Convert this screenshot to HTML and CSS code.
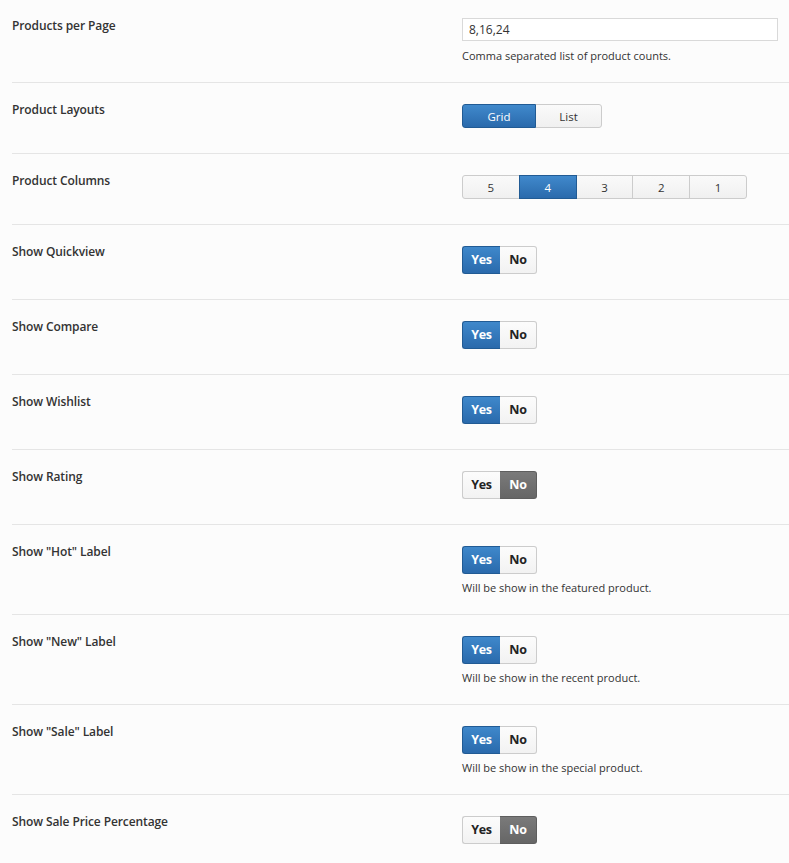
FILE: index.html
```html
<!DOCTYPE html>
<html>
<head>
<meta charset="utf-8">
<link rel="stylesheet" href="styles.css">
</head>
<body>
<div class="form">
  <div class="row first">
    <div class="label">Products per Page</div>
    <div class="ctrl">
      <input class="text" type="text" value="8,16,24">
      <div class="help">Comma separated list of product counts.</div>
    </div>
  </div>
  <div class="row">
    <div class="label">Product Layouts</div>
    <div class="ctrl">
      <div class="group">
        <span class="btn active w-grid">Grid</span><span class="btn w-list">List</span>
      </div>
    </div>
  </div>
  <div class="row">
    <div class="label">Product Columns</div>
    <div class="ctrl">
      <div class="group">
        <span class="btn w-col">5</span><span class="btn active w-col">4</span><span class="btn w-col">3</span><span class="btn w-col">2</span><span class="btn w-col">1</span>
      </div>
    </div>
  </div>
  <div class="row">
    <div class="label">Show Quickview</div>
    <div class="ctrl"><div class="toggle"><span class="t yes on">Yes</span><span class="t no">No</span></div></div>
  </div>
  <div class="row">
    <div class="label">Show Compare</div>
    <div class="ctrl"><div class="toggle"><span class="t yes on">Yes</span><span class="t no">No</span></div></div>
  </div>
  <div class="row">
    <div class="label">Show Wishlist</div>
    <div class="ctrl"><div class="toggle"><span class="t yes on">Yes</span><span class="t no">No</span></div></div>
  </div>
  <div class="row">
    <div class="label">Show Rating</div>
    <div class="ctrl"><div class="toggle"><span class="t yes">Yes</span><span class="t no off">No</span></div></div>
  </div>
  <div class="row">
    <div class="label">Show "Hot" Label</div>
    <div class="ctrl"><div class="toggle"><span class="t yes on">Yes</span><span class="t no">No</span></div>
      <div class="help">Will be show in the featured product.</div></div>
  </div>
  <div class="row">
    <div class="label">Show "New" Label</div>
    <div class="ctrl"><div class="toggle"><span class="t yes on">Yes</span><span class="t no">No</span></div>
      <div class="help">Will be show in the recent product.</div></div>
  </div>
  <div class="row">
    <div class="label">Show "Sale" Label</div>
    <div class="ctrl"><div class="toggle"><span class="t yes on">Yes</span><span class="t no">No</span></div>
      <div class="help">Will be show in the special product.</div></div>
  </div>
  <div class="row last">
    <div class="label">Show Sale Price Percentage</div>
    <div class="ctrl"><div class="toggle"><span class="t yes">Yes</span><span class="t no off">No</span></div></div>
  </div>
</div>
</body>
</html>
```
FILE: styles.css
```css
html, body {
  margin: 0;
  padding: 0;
  background: #fcfcfc;
}
body {
  font-family: "Open Sans", "Noto Sans", sans-serif;
  color: #333;
  overflow: hidden;
}
.form {
  padding: 0 0 0 12px;
  margin-top: -2px;
}
.row {
  display: flex;
  border-bottom: 1px solid #e5e5e5;
  padding: 21px 0 20px 0;
}
.row.first {
  padding-top: 20px;
  padding-bottom: 18px;
}
.row.last {
  border-bottom: none;
}
.label {
  width: 450px;
  font-size: 12px;
  font-weight: 600;
  line-height: 16px;
  margin-top: -2px;
  letter-spacing: -0.1px;
}
.row.first .label {
  margin-top: 0;
}
.ctrl {
  flex: 1;
}
.text {
  display: block;
  box-sizing: border-box;
  width: 316px;
  height: 23px;
  border: 1px solid #d9d9d9;
  background: #fff;
  font-family: inherit;
  font-size: 12px;
  color: #333;
  padding: 0 6px;
  margin: 0;
  outline: none;
}
.help {
  font-size: 11px;
  line-height: 16px;
  color: #333;
  margin-top: 7px;
  letter-spacing: 0;
}
.toggle + .help {
  margin-top: 6px;
  line-height: 15px;
  margin-bottom: -1px;
}
.group, .toggle {
  display: flex;
  margin-bottom: 5px;
}
.btn {
  box-sizing: border-box;
  height: 24px;
  line-height: 23px;
  font-size: 11.5px;
  text-align: center;
  border: 1px solid #ccc;
  background: linear-gradient(#fafafa, #f0f0f0);
  color: #333;
  margin-left: -1px;
}
.btn:first-child {
  margin-left: 0;
  border-radius: 3px 0 0 3px;
}
.btn:last-child {
  border-radius: 0 3px 3px 0;
}
.btn.active {
  background: linear-gradient(#4089cc, #2a6aac);
  border-color: #215b94;
  color: #fff;
  position: relative;
}
.w-grid { width: 74px; }
.w-list { width: 67px; }
.w-col { width: 57.8px; }
.t {
  box-sizing: border-box;
  height: 28px;
  line-height: 26px;
  font-size: 12.5px;
  font-weight: 700;
  text-align: center;
  border: 1px solid #ccc;
  background: linear-gradient(#fcfcfc, #f2f2f2);
  color: #222;
  letter-spacing: -0.3px;
}
.t.yes {
  width: 38px;
  border-radius: 3px 0 0 3px;
  border-right: none;
}
.t.no {
  width: 37px;
  border-radius: 0 3px 3px 0;
  border-left: none;
}
.t.on {
  background: linear-gradient(#3f88cb, #2a6aac);
  border-color: #215b94;
  color: #fff;
}
.t.off {
  background: linear-gradient(#7a7a7a, #666);
  border-color: #5e5e5e;
  color: #fff;
}
```
